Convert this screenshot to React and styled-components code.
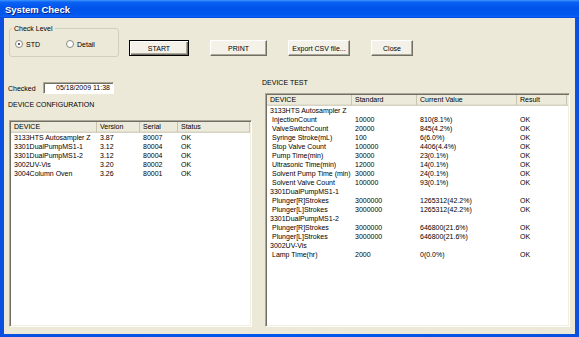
import styled, { createGlobalStyle } from "styled-components";

const GlobalStyle = createGlobalStyle`
  html, body {
    margin: 0;
    padding: 0;
    background: #fff;
  }
  body {
    font-family: "Liberation Sans", Arial, sans-serif;
    color: #000;
  }
`;

const Window = styled.div`
  width: 579px;
  height: 337px;
  display: flex;
  flex-direction: column;
  background: linear-gradient(to right, #0a4fe0, #0058ee 50%, #0a4fe0);
  overflow: hidden;
`;

const TitleBar = styled.div`
  height: 18px;
  flex-shrink: 0;
  display: flex;
  align-items: center;
  padding-left: 5px;
  background: linear-gradient(
    to bottom,
    #3d95ff 0%,
    #0a62f4 12%,
    #0053ea 45%,
    #0058ef 80%,
    #0a5ff7 92%,
    #003dd7 100%
  );
  color: #fff;
  font-size: 9.5px;
  font-weight: bold;
  text-shadow: 1px 1px 0 #0a1e7c;
`;

const Frame = styled.div`
  flex: 1;
  display: flex;
  padding: 0 4px 3px 4px;
  min-height: 0;
`;

const Client = styled.div`
  flex: 1;
  display: flex;
  flex-direction: column;
  background: #ece9d8;
  padding: 10px 5px 7px 5px;
  font-size: 7px;
  line-height: 9px;
  min-height: 0;
`;

const TopRow = styled.div`
  display: flex;
  align-items: flex-end;
  height: 29px;
  flex-shrink: 0;
`;

const GroupBox = styled.div`
  position: relative;
  box-sizing: border-box;
  width: 110px;
  height: 29px;
  border: 1px solid #d0d0bf;
  border-radius: 3px;
  display: flex;
  align-items: center;
  padding: 3px 0 0 5px;
`;

const Legend = styled.span`
  position: absolute;
  top: -5px;
  left: 2px;
  padding: 0 2px;
  background: #ece9d8;
`;

const RadioItem = styled.label`
  display: flex;
  align-items: center;
  gap: 3px;
  width: 51px;
`;

const RadioDot = styled.span`
  position: relative;
  box-sizing: border-box;
  width: 8px;
  height: 8px;
  border-radius: 50%;
  border: 1px solid #8a8a80;
  background: #fff;

  &::after {
    content: "";
    display: ${({ $checked }) => ($checked ? "block" : "none")};
    position: absolute;
    left: 2px;
    top: 2px;
    width: 2px;
    height: 2px;
    border-radius: 50%;
    background: #222;
  }
`;

const ButtonRow = styled.div`
  display: flex;
  gap: 21px;
  margin-left: 10px;
  margin-bottom: 1px;
`;

const Button = styled.button`
  box-sizing: border-box;
  width: ${({ $w }) => $w}px;
  height: 16px;
  padding: 0;
  font-family: inherit;
  font-size: 7px;
  color: #000;
  background: #f3f1e8;
  border: 1px solid;
  border-color: ${({ $primary }) =>
    $primary ? "#000" : "#fff #716f64 #716f64 #fff"};
  box-shadow: ${({ $primary }) =>
    $primary
      ? "inset 1px 1px #fff, inset -1px -1px #716f64, inset -2px -2px #aca899"
      : "inset -1px -1px #aca899"};
`;

const Main = styled.div`
  flex: 1;
  display: flex;
  gap: 13px;
  min-height: 0;
`;

const LeftCol = styled.div`
  width: 243px;
  display: flex;
  flex-direction: column;
  padding-top: 25px;
`;

const RightCol = styled.div`
  flex: 1;
  display: flex;
  flex-direction: column;
  padding-top: 21px;
`;

const CheckedRow = styled.div`
  display: flex;
  align-items: center;
  height: 12px;
`;

const CheckedLabel = styled.span`
  width: 35px;
  margin-left: -1px;
`;

const DateBox = styled.div`
  box-sizing: border-box;
  width: 71px;
  height: 12px;
  background: #fff;
  border: 1px solid;
  border-color: #aca899 #fff #fff #aca899;
  box-shadow: inset 1px 1px #716f64;
  text-align: right;
  padding-right: 3px;
  line-height: 10px;
`;

const SectionLabel = styled.div`
  margin-top: ${({ $mt }) => $mt || 0}px;
  margin-left: ${({ $ml }) => $ml || 0}px;
  height: 9px;
`;

const ListBox = styled.div`
  flex: 1;
  margin-top: ${({ $mt }) => $mt}px;
  background: #fff;
  border: 1px solid;
  border-color: #aca899 #fff #fff #aca899;
  box-shadow: inset 1px 1px #716f64, inset -1px -1px #f1efe2;
  padding: 1px;
  overflow: hidden;
`;

const HeaderRow = styled.div`
  display: grid;
  grid-template-columns: ${({ $cols }) => $cols};
  height: 10px;
  background: #ebeadb;
  border-bottom: 1px solid #d6d2c2;
  box-shadow: inset 0 -1px #e2decd;
`;

const HeaderCell = styled.div`
  padding-left: 3px;
  line-height: 10px;
  white-space: nowrap;
  overflow: hidden;
  border-right: 1px solid #c7c5b2;
`;

const Row = styled.div`
  display: grid;
  grid-template-columns: ${({ $cols }) => $cols};
  height: 9px;
  line-height: 9px;
`;

const Cell = styled.div`
  padding-left: ${({ $indent }) => ($indent ? 5 : 3)}px;
  white-space: nowrap;
  overflow: hidden;
`;

const configCols = "86px 43px 38px 72px 1fr";
const testCols = "85px 65px 100px 50px 1fr";

const configRows = [
  ["3133HTS Autosampler Z", "3.87", "80007", "OK"],
  ["3301DualPumpMS1-1", "3.12", "80004", "OK"],
  ["3301DualPumpMS1-2", "3.12", "80004", "OK"],
  ["3002UV-Vis", "3.20", "80002", "OK"],
  ["3004Column Oven", "3.26", "80001", "OK"],
];

const testRows = [
  { group: "3133HTS Autosampler Z" },
  ["InjectionCount", "10000", "810(8.1%)", "OK"],
  ["ValveSwitchCount", "20000", "845(4.2%)", "OK"],
  ["Syringe Stroke(mL)", "100", "6(6.0%)", "OK"],
  ["Stop Valve Count", "100000", "4406(4.4%)", "OK"],
  ["Pump Time(min)", "30000", "23(0.1%)", "OK"],
  ["Ultrasonic Time(min)", "12000", "14(0.1%)", "OK"],
  ["Solvent Pump Time (min)", "30000", "24(0.1%)", "OK"],
  ["Solvent Valve Count", "100000", "93(0.1%)", "OK"],
  { group: "3301DualPumpMS1-1" },
  ["Plunger[R]Strokes", "3000000", "1265312(42.2%)", "OK"],
  ["Plunger[L]Strokes", "3000000", "1265312(42.2%)", "OK"],
  { group: "3301DualPumpMS1-2" },
  ["Plunger[R]Strokes", "3000000", "646800(21.6%)", "OK"],
  ["Plunger[L]Strokes", "3000000", "646800(21.6%)", "OK"],
  { group: "3002UV-Vis" },
  ["Lamp Time(hr)", "2000", "0(0.0%)", "OK"],
];

function ListHeader({ cols, labels }) {
  return (
    <HeaderRow $cols={cols}>
      {labels.map((l) => (
        <HeaderCell key={l}>{l}</HeaderCell>
      ))}
      <div />
    </HeaderRow>
  );
}

export default function App() {
  return (
    <>
      <GlobalStyle />
      <Window>
        <TitleBar>System Check</TitleBar>
        <Frame>
          <Client>
            <TopRow>
              <GroupBox>
                <Legend>Check Level</Legend>
                <RadioItem>
                  <RadioDot $checked />
                  STD
                </RadioItem>
                <RadioItem>
                  <RadioDot />
                  Detail
                </RadioItem>
              </GroupBox>
              <ButtonRow>
                <Button $w={60} $primary>
                  START
                </Button>
                <Button $w={57}>PRINT</Button>
                <Button $w={62}>Export CSV file...</Button>
                <Button $w={42}>Close</Button>
              </ButtonRow>
            </TopRow>

            <Main>
              <LeftCol>
                <CheckedRow>
                  <CheckedLabel>Checked</CheckedLabel>
                  <DateBox>05/18/2009 11:38</DateBox>
                </CheckedRow>
                <SectionLabel $mt={6} $ml={-1}>
                  DEVICE CONFIGURATION
                </SectionLabel>
                <ListBox $mt={11}>
                  <ListHeader
                    cols={configCols}
                    labels={["DEVICE", "Version", "Serial", "Status"]}
                  />
                  {configRows.map((r) => (
                    <Row key={r[0]} $cols={configCols}>
                      {r.map((c, i) => (
                        <Cell key={i}>{c}</Cell>
                      ))}
                    </Row>
                  ))}
                </ListBox>
              </LeftCol>

              <RightCol>
                <SectionLabel $ml={-3}>DEVICE TEST</SectionLabel>
                <ListBox $mt={6}>
                  <ListHeader
                    cols={testCols}
                    labels={["DEVICE", "Standard", "Current Value", "Result"]}
                  />
                  {testRows.map((r, idx) =>
                    r.group ? (
                      <Row key={idx} $cols={testCols}>
                        <Cell>{r.group}</Cell>
                      </Row>
                    ) : (
                      <Row key={idx} $cols={testCols}>
                        {r.map((c, i) => (
                          <Cell key={i} $indent={i === 0}>
                            {c}
                          </Cell>
                        ))}
                      </Row>
                    )
                  )}
                </ListBox>
              </RightCol>
            </Main>
          </Client>
        </Frame>
      </Window>
    </>
  );
}
